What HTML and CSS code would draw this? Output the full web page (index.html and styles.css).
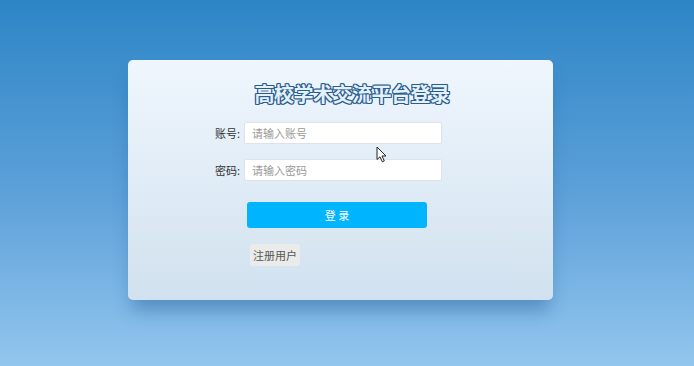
FILE: index.html
```html
<!DOCTYPE html>
<html lang="zh-CN">
<head>
  <meta charset="UTF-8" />
  <title>高校学术交流平台登录</title>
  <link rel="stylesheet" href="styles.css">
</head>
<body>
  <div class="login-box">
    <h1 class="title">高校学术交流平台登录</h1>
    <form class="login-form" onsubmit="return false;">
      <div class="form-row">
        <label for="username">账号:</label>
        <input id="username" type="text" placeholder="请输入账号" />
      </div>
      <div class="form-row">
        <label for="password">密码:</label>
        <input id="password" type="password" placeholder="请输入密码" />
      </div>
      <button class="btn-login" type="submit">登 录</button>
      <button class="btn-register" type="button">注册用户</button>
    </form>
    <!-- mouse pointer from the capture -->
    <svg class="pointer" width="12" height="17" viewBox="0 0 12 17">
      <path d="M1 1 L1 13.5 L4 10.8 L6.3 15.8 L8.3 14.9 L6 10 L10 10 Z" fill="#fff" stroke="#222" stroke-width="1" stroke-linejoin="round"/>
    </svg>
  </div>
</body>
</html>
```

FILE: styles.css
```css
html, body {
  height: 100%;
}

body {
  margin: 0;
  font-family: "Noto Sans CJK SC", "Noto Sans", sans-serif;
  background: linear-gradient(to bottom, #2d85c6 0%, #5fa2da 55%, #93c6ee 100%);
  overflow: hidden;
}

/* Card */
.login-box {
  position: relative;
  width: 425px;
  height: 240px;
  margin: 60px 0 0 128px;
  box-sizing: border-box;
  padding-top: 21px;
  border-radius: 5px;
  background: linear-gradient(to bottom, #eff6fd 0%, #e2edf7 45%, #d1e1ef 100%);
  box-shadow: 0 14px 18px -4px rgba(30, 90, 150, 0.45);
}

.title {
  margin: 0 0 15px 23px;
  text-align: center;
  font-size: 20px;
  line-height: 26px;
  font-weight: bold;
  color: #e4f0fa;
  letter-spacing: -0.5px;
  text-shadow:
    1px 0 0 #2a5d8e,
    -1px 0 0 #2a5d8e,
    0 1px 0 #2a5d8e,
    0 -1px 0 #2a5d8e,
    1px 1px 0 #2a5d8e,
    -1px -1px 0 #2a5d8e,
    1px -1px 0 #2a5d8e,
    -1px 1px 0 #2a5d8e;
}

.login-form {
  display: flex;
  flex-direction: column;
  align-items: flex-start;
  padding-left: 80px;
}

.form-row {
  display: flex;
  align-items: center;
  margin-bottom: 15px;
}

.form-row label {
  width: 36px;
  font-size: 11px;
  color: #333;
  margin-left: 7px;
  margin-right: -7px;
}

.form-row input {
  width: 198px;
  height: 22px;
  box-sizing: border-box;
  padding: 0 7px;
  border: 1px solid #dde3ea;
  border-radius: 2px;
  background: #fff;
  font-family: inherit;
  font-size: 11px;
  color: #333;
  outline: none;
}

.form-row input::placeholder {
  color: #9a9a9a;
}

.btn-login {
  width: 180px;
  height: 26px;
  margin: 6px 0 16px 39px;
  border: none;
  border-radius: 3px;
  background: #00b4fd;
  color: #fff;
  font-family: inherit;
  font-size: 11px;
  cursor: pointer;
}

.btn-register {
  height: 22px;
  margin-left: 42px;
  padding: 0 3px;
  border: none;
  border-radius: 3px;
  background: #ebebeb;
  color: #555;
  font-family: inherit;
  font-size: 11px;
  cursor: pointer;
}

.pointer {
  position: absolute;
  left: 248px;
  top: 86px;
}
```
